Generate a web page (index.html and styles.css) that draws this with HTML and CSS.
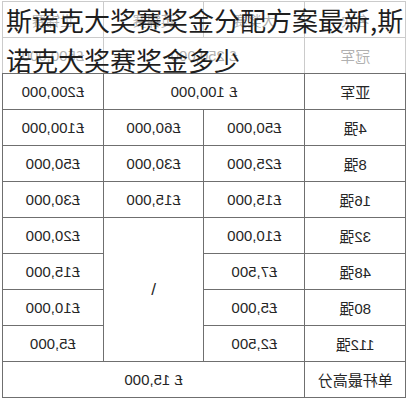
FILE: index.html
```html
<!DOCTYPE html>
<html lang="zh-CN">
<head>
<meta charset="utf-8">
<title>斯诺克大奖赛奖金分配方案</title>
<link rel="stylesheet" href="styles.css">
</head>
<body>
<div class="page">
  <table class="prize">
    <tr class="head"><td>名次</td><td>大奖赛</td><td>英锦赛</td><td>世锦赛</td></tr>
    <tr><td>冠军</td><td colspan="2">£ 250,000</td><td>£500,000</td></tr>
    <tr><td>亚军</td><td colspan="2">£ 100,000</td><td>£200,000</td></tr>
    <tr><td>4强</td><td>£50,000</td><td>£60,000</td><td>£100,000</td></tr>
    <tr><td>8强</td><td>£25,000</td><td>£30,000</td><td>£50,000</td></tr>
    <tr><td>16强</td><td>£15,000</td><td>£15,000</td><td>£30,000</td></tr>
    <tr><td>32强</td><td>£10,000</td><td rowspan="4" class="slash">\</td><td>£20,000</td></tr>
    <tr><td>48强</td><td>£7,500</td><td>£15,000</td></tr>
    <tr><td>80强</td><td>£5,000</td><td>£10,000</td></tr>
    <tr><td>112强</td><td>£2,500</td><td>£5,000</td></tr>
    <tr><td>单杆最高分</td><td colspan="3">£ 15,000</td></tr>
  </table>
  <div class="veil">
    <h1 class="title">斯诺克大奖赛奖金分配方案最新,斯<br>诺克大奖赛奖金多少</h1>
  </div>
</div>
</body>
</html>
```

FILE: styles.css
```css
html, body {
  margin: 0;
  padding: 0;
  background: #ffffff;
}

.page {
  position: relative;
  width: 407px;
  height: 400px;
  padding: 1px 1px 0 2px;
  box-sizing: border-box;
  overflow: hidden;
}

.prize {
  width: 404px;
  border-collapse: collapse;
  table-layout: fixed;
  transform: scaleX(-1);
  font-family: "Liberation Sans", "Noto Sans CJK SC", sans-serif;
  font-size: 15px;
  color: #262626;
}

.prize td {
  width: 25%;
  height: 35px;
  padding: 0;
  border: 1px solid #6f6f6f;
  text-align: center;
  vertical-align: middle;
  white-space: nowrap;
}

.prize .head td {
  font-size: 14px;
}

.prize .slash {
  font-size: 17px;
}

.veil {
  position: absolute;
  left: 0;
  top: 0;
  width: 407px;
  height: 73px;
  background: rgba(255, 255, 255, 0.64);
}

.title {
  margin: 0;
  padding: 0 0 0 6px;
  font-family: "Noto Sans CJK SC", sans-serif;
  font-weight: 400;
  font-size: 26px;
  line-height: 40px;
  color: #1e1e1e;
  white-space: nowrap;
}
```
